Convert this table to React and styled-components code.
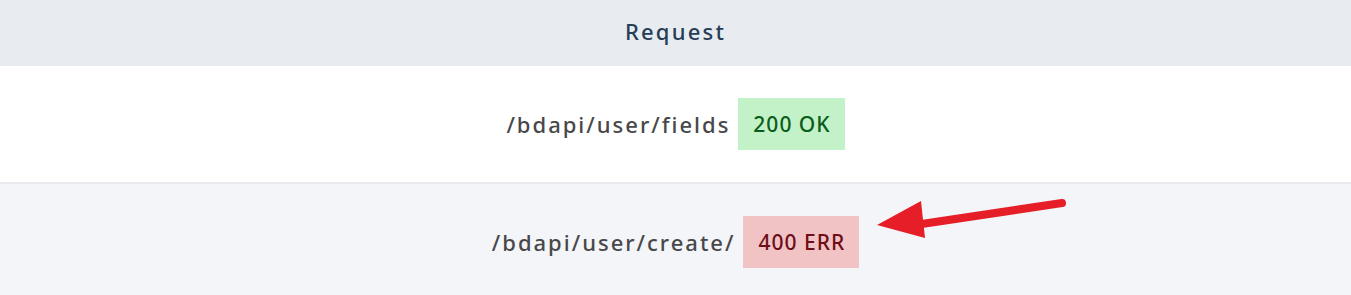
import React from 'react';
import styled, { createGlobalStyle } from 'styled-components';

const Global = createGlobalStyle`
  html, body { margin: 0; padding: 0; background: #f4f5f8; }
  body { font-family: "Noto Sans", "Open Sans", sans-serif; }
`;

const Table = styled.div`
  width: 100%;
  display: flex;
  flex-direction: column;
`;

const Header = styled.div`
  height: 66px;
  background: #e8ebf0;
  display: flex;
  align-items: center;
  justify-content: center;
  color: #263d58;
  font-size: 22px;
  font-weight: 500;
  letter-spacing: 2.2px;
  padding-bottom: 4px;
  box-sizing: border-box;
`;

const Row = styled.div`
  position: relative;
  height: 116px;
  background: ${(p) => (p.alt ? '#f4f5f8' : '#ffffff')};
  border-bottom: ${(p) => (p.alt ? 'none' : '2px solid #e8e9ec')};
  display: flex;
  align-items: center;
  justify-content: center;
  gap: 8px;
`;

const Path = styled.span`
  font-size: 22px;
  font-weight: 500;
  letter-spacing: 2px;
  color: #48484a;
`;

const Badge = styled.span`
  font-size: 21px;
  font-weight: 500;
  letter-spacing: 1px;
  line-height: 24px;
  padding: 14px 14px 14px 15px;
  background: ${(p) => (p.err ? '#f2c3c5' : '#c4f2c8')};
  color: ${(p) => (p.err ? '#6e0e18' : '#0b5d1c')};
`;

const Arrow = styled.svg`
  position: absolute;
  left: 870px;
  top: 10px;
  overflow: visible;
`;

export default function App() {
  return (
    <>
      <Global />
      <Table>
        <Header>Request</Header>
        <Row>
          <Path>/bdapi/user/fields</Path>
          <Badge>200 OK</Badge>
        </Row>
        <Row alt>
          <Path>/bdapi/user/create/</Path>
          <Badge err>400 ERR</Badge>
          <Arrow width="200" height="50" viewBox="0 0 200 50">
            <line x1="192" y1="9" x2="45" y2="31" stroke="#e61e27" strokeWidth="8" strokeLinecap="round" />
            <polygon points="7,31 51,7 55,44" fill="#e61e27" />
          </Arrow>
        </Row>
      </Table>
    </>
  );
}
